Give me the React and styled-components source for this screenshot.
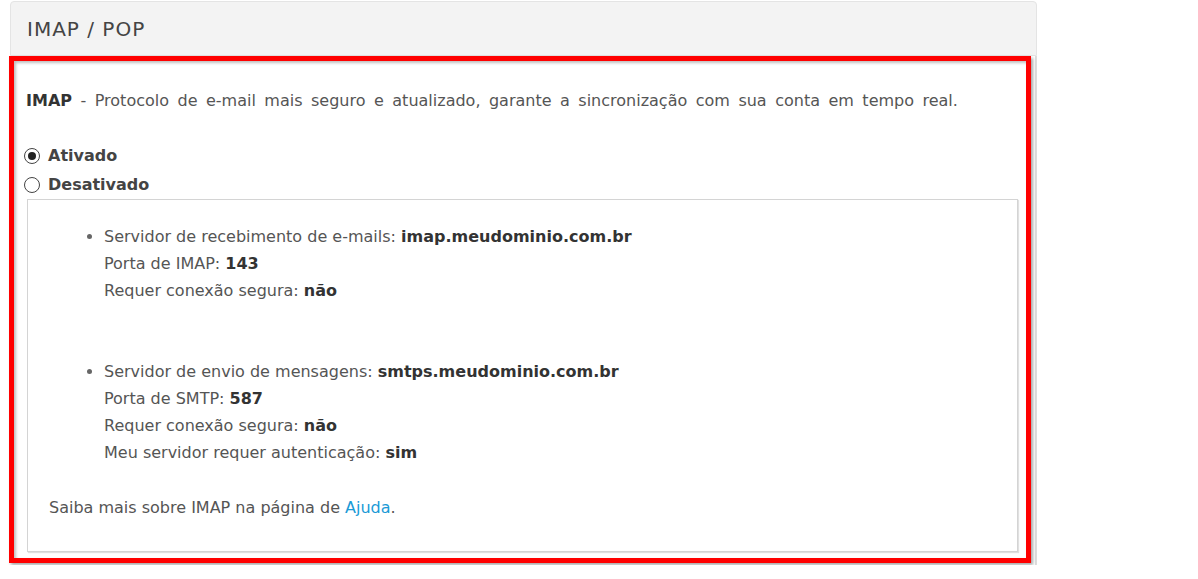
import styled, { createGlobalStyle } from "styled-components";

const GlobalStyle = createGlobalStyle`
  body {
    margin: 0;
    background: #fff;
    font-family: "DejaVu Sans", "Liberation Sans", sans-serif;
    color: #555;
  }
`;

const Panel = styled.div`
  width: 1027px;
  margin: 1px 0 0 10px;
`;

const PanelHeading = styled.div`
  height: 53px;
  display: flex;
  align-items: center;
  padding-left: 16px;
  background: #f3f3f3;
  border: 1px solid #e4e4e4;
  border-radius: 4px 4px 0 0;
  font-size: 20px;
  letter-spacing: 1px;
  color: #444;
`;

const PanelBody = styled.div`
  border-right: 2px solid #ddd;
  padding-right: 4px;
  padding-bottom: 2px;
`;

const Highlight = styled.div`
  margin-left: -1px;
  border: 5px solid #ff0000;
  box-shadow: 2px 2px 3px rgba(0, 0, 0, 0.35), inset 2px 2px 3px rgba(0, 0, 0, 0.25);
  padding: 29px 8px 6px 12px;
`;

const Intro = styled.p`
  margin: 0 0 29px;
  font-size: 16px;
  line-height: 22px;
  word-spacing: 3.4px;
  color: #555;

  strong {
    color: #333;
  }
`;

const RadioRow = styled.label`
  display: flex;
  align-items: center;
  gap: 8px;
  height: 29px;
  margin-left: -2px;
  font-size: 16px;
  font-weight: 700;
  color: #444;
`;

const Radio = styled.span`
  width: 14px;
  height: 14px;
  border-radius: 50%;
  border: 1px solid #444;
  background: #fff;
  display: flex;
  align-items: center;
  justify-content: center;

  &::after {
    content: "";
    width: 8px;
    height: 8px;
    border-radius: 50%;
    background: ${(p) => (p.$checked ? "#222" : "transparent")};
  }
`;

const InfoBox = styled.div`
  margin: 0 0 0 1px;
  border: 1px solid #d4d4d4;
  box-shadow: 1px 1px 1px rgba(0, 0, 0, 0.12);
  padding: 23px 20px 30px 21px;
`;

const List = styled.ul`
  margin: 0 0 28px;
  padding-left: 55px;
  font-size: 16px;
  line-height: 27px;
`;

const Item = styled.li`
  margin-bottom: 54px;

  &:last-child {
    margin-bottom: 0;
  }

  &::marker {
    font-size: 16px;
    color: #666;
  }
`;

const Value = styled.strong`
  color: #333;
`;

const Line = styled.div``;

const Note = styled.p`
  margin: 0;
  font-size: 16px;
  line-height: 27px;
`;

const Link = styled.a`
  color: #1a9ad6;
  text-decoration: none;
`;

const servers = [
  [
    ["Servidor de recebimento de e-mails", "imap.meudominio.com.br"],
    ["Porta de IMAP", "143"],
    ["Requer conexão segura", "não"],
  ],
  [
    ["Servidor de envio de mensagens", "smtps.meudominio.com.br"],
    ["Porta de SMTP", "587"],
    ["Requer conexão segura", "não"],
    ["Meu servidor requer autenticação", "sim"],
  ],
];

export default function App() {
  return (
    <>
      <GlobalStyle />
      <Panel>
        <PanelHeading>IMAP / POP</PanelHeading>
        <PanelBody>
          <Highlight>
            <Intro>
              <strong>IMAP</strong> - Protocolo de e-mail mais seguro e atualizado, garante a
              sincronização com sua conta em tempo real.
            </Intro>
            <RadioRow>
              <Radio $checked />
              Ativado
            </RadioRow>
            <RadioRow>
              <Radio />
              Desativado
            </RadioRow>
            <InfoBox>
              <List>
                {servers.map((group, i) => (
                  <Item key={i}>
                    {group.map(([label, value]) => (
                      <Line key={label}>
                        {label}: <Value>{value}</Value>
                      </Line>
                    ))}
                  </Item>
                ))}
              </List>
              <Note>
                Saiba mais sobre IMAP na página de <Link href="#">Ajuda</Link>.
              </Note>
            </InfoBox>
          </Highlight>
        </PanelBody>
      </Panel>
    </>
  );
}
